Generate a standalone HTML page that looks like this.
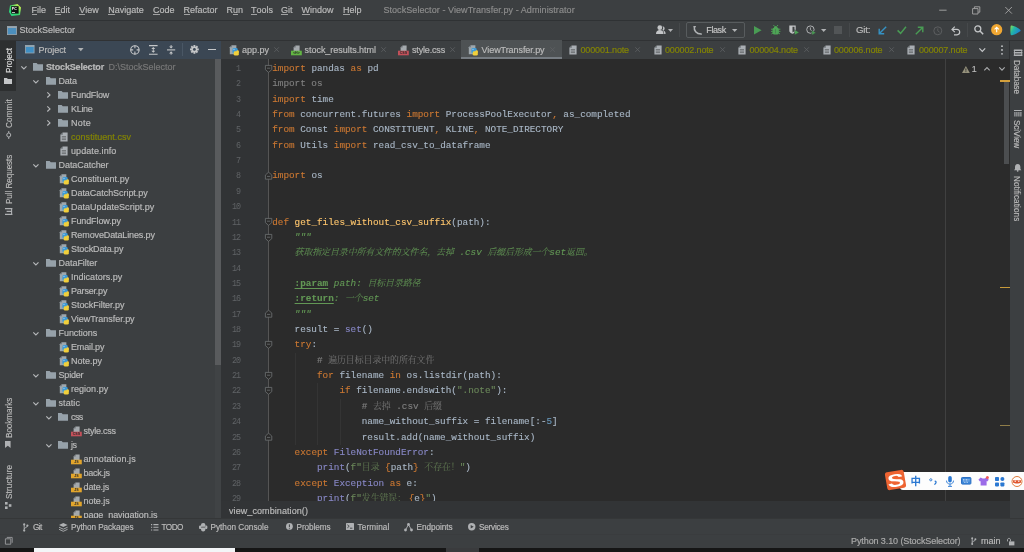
<!DOCTYPE html><html><head><meta charset="utf-8"><title>StockSelector</title><style>
*{box-sizing:border-box;margin:0;padding:0}
html,body{width:1024px;height:552px;overflow:hidden;background:#3c3f41}
body{position:relative;font-family:"Liberation Sans","Noto Sans CJK SC",sans-serif;font-size:9px;color:#bbbbbb;letter-spacing:0;-webkit-font-smoothing:antialiased}
.a{position:absolute;white-space:nowrap}
.t{position:absolute;white-space:nowrap;line-height:12px;height:12px;-webkit-text-stroke:0.18px currentColor}
.ul{background:linear-gradient(currentColor,currentColor) 0 10.300px/100% 0.800px no-repeat;display:inline-block;height:12px}
.code{position:absolute;left:272.2px;white-space:pre;font-family:"Liberation Mono","Noto Sans CJK SC",monospace;font-size:9.33px;letter-spacing:0;line-height:15.36px;height:15.36px;color:#a9b7c6;-webkit-text-stroke:0.12px currentColor}
.ln{position:absolute;left:221px;width:19.200px;text-align:right;font-family:"Liberation Mono","Noto Sans CJK SC",monospace;font-size:9.33px;letter-spacing:-1px;transform:scaleX(.9);transform-origin:100% 50%;line-height:15.36px;height:15.36px;color:#606366}
.k{color:#cc7832}.g{color:#808080}.f{color:#ffc66d}.b{color:#8888c6}.s{color:#6a8759}.n{color:#6897bb}
.d{color:#629755;font-style:italic}
.s .c,.g .c{opacity:.82}
.d .c{opacity:.9}
.c{font-family:"Liberation Mono","Noto Serif CJK SC","Noto Sans CJK SC",serif;font-weight:300;font-size:8.85px;letter-spacing:0}
.vt{position:absolute;white-space:nowrap;line-height:12px;height:12px;transform-origin:0 0;-webkit-text-stroke:0.15px currentColor}
svg{position:absolute;overflow:visible}
</style></head><body><div id="root" style="position:absolute;left:0;top:0;width:1024px;height:552px;will-change:transform">
<div class="a" style="left:0px;top:0px;width:1024px;height:20px;background:#3c3f41;"></div>
<div class="a" style="left:0px;top:20px;width:1024px;height:20px;background:#3c3f41;"></div>
<div class="a" style="left:0px;top:19.5px;width:1024px;height:1px;background:#2f3234;"></div>
<div class="a" style="left:0px;top:40px;width:16px;height:478px;background:#3c3f41;"></div>
<div class="a" style="left:0px;top:40px;width:16px;height:50.5px;background:#2d2f30;"></div>
<div class="a" style="left:15.7px;top:90.5px;width:0.7px;height:427px;background:#383a3c;"></div>
<div class="a" style="left:16px;top:40px;width:205px;height:19px;background:#3b4754;"></div>
<div class="a" style="left:16px;top:59px;width:205px;height:459px;background:#3c3f41;"></div>
<div class="a" style="left:215.2px;top:59px;width:5.8px;height:459px;background:#404345;"></div>
<div class="a" style="left:215.2px;top:59px;width:5.8px;height:305.5px;background:#595b5d;"></div>
<div class="a" style="left:221px;top:40px;width:790px;height:19px;background:#3c3f41;"></div>
<div class="a" style="left:221px;top:58.6px;width:789px;height:0.8px;background:#323232;"></div>
<div class="a" style="left:221px;top:59px;width:47.5px;height:442px;background:#313335;"></div>
<div class="a" style="left:268.5px;top:59px;width:742.5px;height:442px;background:#2b2b2b;"></div>
<div class="a" style="left:268.3px;top:59px;width:0.8px;height:442px;background:#555555;"></div>
<div class="a" style="left:944.7px;top:59px;width:1px;height:442px;background:#404040;"></div>
<div class="a" style="left:1003.8px;top:81px;width:5.5px;height:83px;background:#4c4e50;"></div>
<div class="a" style="left:1000px;top:80.2px;width:9.6px;height:1.4px;background:#d4a03c;"></div>
<div class="a" style="left:1000px;top:286.6px;width:9.6px;height:1.2px;background:#c79a3a;"></div>
<div class="a" style="left:1000px;top:425.3px;width:9.6px;height:1px;background:#8f7d49;"></div>
<div class="a" style="left:221px;top:501px;width:789px;height:17px;background:#323436;"></div>
<div class="a" style="left:1010px;top:40px;width:14px;height:478px;background:#3c3f41;"></div>
<div class="a" style="left:0px;top:518px;width:1024px;height:18px;background:#3c3f41;"></div>
<div class="a" style="left:0px;top:517.6px;width:1024px;height:0.8px;background:#353738;"></div>
<div class="a" style="left:0px;top:536px;width:1024px;height:11.6px;background:#3c3f41;"></div>
<div class="a" style="left:0px;top:534.2px;width:1024px;height:0.8px;background:#3a3c3e;"></div>
<div class="a" style="left:0px;top:547.6px;width:1024px;height:4.4px;background:#161616;"></div>
<div class="a" style="left:33.5px;top:547.9px;width:201.5px;height:4.1px;background:#f3f5f7;"></div>
<div class="a" style="left:445.5px;top:548.2px;width:33.5px;height:3.8px;background:#3a3b3d;"></div>
<div class="a" style="left:0px;top:39.5px;width:1024px;height:1px;background:#303234;"></div>
<div class="a" style="left:1009.3px;top:40.4px;width:0.9px;height:18.6px;background:#2f3133;"></div>
<div class="t m" style="left:31.5px;top:4px;color:#bbbbbb;"><span class="ul">F</span>ile</div>
<div class="t m" style="left:54.5px;top:4px;color:#bbbbbb;"><span class="ul">E</span>dit</div>
<div class="t m" style="left:79.3px;top:4px;color:#bbbbbb;"><span class="ul">V</span>iew</div>
<div class="t m" style="left:108.2px;top:4px;color:#bbbbbb;"><span class="ul">N</span>avigate</div>
<div class="t m" style="left:153px;top:4px;color:#bbbbbb;"><span class="ul">C</span>ode</div>
<div class="t m" style="left:183.5px;top:4px;color:#bbbbbb;"><span class="ul">R</span>efactor</div>
<div class="t m" style="left:226.5px;top:4px;color:#bbbbbb;">R<span class="ul">u</span>n</div>
<div class="t m" style="left:251px;top:4px;color:#bbbbbb;"><span class="ul">T</span>ools</div>
<div class="t m" style="left:281px;top:4px;color:#bbbbbb;"><span class="ul">G</span>it</div>
<div class="t m" style="left:301.5px;top:4px;color:#bbbbbb;"><span class="ul">W</span>indow</div>
<div class="t m" style="left:343px;top:4px;color:#bbbbbb;"><span class="ul">H</span>elp</div>
<div class="t" style="left:383.4px;top:4px;color:#8c8c8c;letter-spacing:0.069px;">StockSelector - ViewTransfer.py - Administrator</div>
<svg style="left:9px;top:3.5px" width="12" height="12" viewBox="0 0 12 12"><defs><linearGradient id="pg" x1="0" y1="1" x2="1" y2="0"><stop offset="0" stop-color="#21d789"/><stop offset=".5" stop-color="#3bd66a"/><stop offset="1" stop-color="#fcf84a"/></linearGradient></defs><path d="M1 1.5 L8.5 0 L12 3.5 L11 11 L2.5 12 L0 8z" fill="url(#pg)"/><rect x="2.2" y="2.2" width="7.4" height="7.4" fill="#111"/><rect x="3" y="8" width="3" height=".7" fill="#fff"/><text x="2.8" y="6.2" font-family="Liberation Sans,sans-serif" font-weight="bold" font-size="3.6" fill="#fff" letter-spacing="0">PC</text></svg>
<svg style="left:939px;top:5px" width="80" height="12" viewBox="0 0 80 12" fill="none" stroke="#a8a8a8" stroke-width="0.9"><path d="M0.2 5.2h7.4"/><path d="M33.6 3.6h5.4v5.4h-5.4z M35.4 3.4v-1.6h5.4v5.4h-1.6"/><path d="M66.3 2l6.6 6.6M72.9 2l-6.6 6.6"/></svg>
<svg style="left:6.5px;top:25.5px" width="10" height="9" viewBox="0 0 10 9"><rect x=".4" y=".4" width="9.2" height="8.2" fill="#4c8fbd" stroke="#9aa7b0" stroke-width=".8"/><rect x=".4" y=".4" width="9.2" height="1.6" fill="#9aa7b0"/></svg>
<div class="t" style="left:19.5px;top:24px;color:#bbbbbb;">StockSelector</div>
<svg style="left:655.8px;top:25.2px" width="9.6" height="9.4" viewBox="0 0 9.6 9.4" ><circle cx="3.800" cy="2.700" r="2.400" fill="#c3c5c7"/><path d="M0 9c0-2.800 1.700-3.900 3.800-3.900s3.800 1.100 3.800 3.900z" fill="#c3c5c7"/><path d="M6.400 1.200c1.400 0 2.200 1 2.200 2.200 0 1-.5 1.800-1.400 2.100 1.500.300 2.400 1.400 2.400 3.500h-1.400c0-2-.7-3.300-2-3.900.6-.6 1-1.300 1-2.200 0-.7-.3-1.300-.8-1.700z" fill="#c3c5c7"/></svg>
<svg style="left:667.5px;top:29px" width="5" height="3" viewBox="0 0 5 3" ><path d="M0 0h5l-2.5 3z" fill="#afb1b3"/></svg>
<div class="a" style="left:679px;top:23px;width:0.8px;height:14px;background:#46494b;"></div>
<div class="a" style="left:686.3px;top:22.4px;width:59px;height:15.400px;border:0.8px solid #585c5e;border-radius:2px"></div>
<svg style="left:693px;top:25.5px" width="9" height="9" viewBox="0 0 9 9" ><path d="M1.400 .8c-.7 3.600 1.800 7 6.800 7.300" fill="none" stroke="#b0b3b5" stroke-width="1.500" stroke-linecap="round"/><path d="M.4 .7h2.600" stroke="#b0b3b5" stroke-width="1.100"/></svg>
<div class="t" style="left:706.3px;top:24.3px;color:#c4c4c4;letter-spacing:-0.403px;">Flask</div>
<svg style="left:732px;top:29px" width="5.4" height="3" viewBox="0 0 5.4 3" ><path d="M0 0h5.4l-2.7 3z" fill="#afb1b3"/></svg>
<svg style="left:754px;top:26px" width="8" height="8.4" viewBox="0 0 8 8.4" ><path d="M0 0l7.6 4.2-7.6 4.2z" fill="#499c54"/></svg>
<svg style="left:770.6px;top:24.8px" width="9.4" height="10" viewBox="0 0 9.4 10" ><rect x="1.500" y="2.800" width="6.400" height="6.600" rx="1.600" fill="#4ea556"/><path d="M2.900 3c0-1.200.8-1.900 1.800-1.900s1.800.7 1.800 1.900z" fill="#4ea556"/><path d="M0 4.200h1.800M9.400 4.200h-1.800M0 6.400h1.800M9.400 6.400h-1.800M.4 9l1.600-1M9 9l-1.600-1M2.400 0l1.100 1.300M7 0l-1.100 1.300" stroke="#4ea556" stroke-width=".9" fill="none"/><path d="M4.700 4v4.400" stroke="#3c3f41" stroke-width=".6" opacity=".6"/></svg>
<svg style="left:788.8px;top:25px" width="10.4" height="10.4" viewBox="0 0 10.4 10.4" ><path d="M.3 .5h6.400v5c0 1.700-1.300 2.700-3.200 3.300-1.900-.6-3.200-1.600-3.200-3.300z" fill="#c3c5c7"/><path d="M3.500 1.800h2v3.700c0 .8-.7 1.500-2 2z" fill="#3c3f41"/><path d="M5.600 4.700l4.600 2.700-4.600 2.700z" fill="#4ea556" stroke="#3c3f41" stroke-width=".5"/></svg>
<svg style="left:806.2px;top:25px" width="10" height="10.4" viewBox="0 0 10 10.4" ><circle cx="4.400" cy="4.600" r="3.700" fill="none" stroke="#afb1b3" stroke-width="1"/><path d="M4.400 2.400v2.400l1.600 1" fill="none" stroke="#afb1b3" stroke-width=".9"/><path d="M5.800 5.200l4.200 2.500-4.200 2.500z" fill="#499c54" stroke="#3c3f41" stroke-width=".5"/></svg>
<svg style="left:821px;top:29px" width="5.4" height="3" viewBox="0 0 5.4 3" ><path d="M0 0h5.4l-2.700 3z" fill="#afb1b3"/></svg>
<div class="a" style="left:834.3px;top:26.4px;width:7.4px;height:7.2px;background:#525557;"></div>
<div class="a" style="left:849.2px;top:23px;width:0.8px;height:14px;background:#46494b;"></div>
<div class="t" style="left:856px;top:24px;color:#bbbbbb;letter-spacing:-0.195px;font-size:9.700px;">Git:</div>
<svg style="left:878px;top:25.8px" width="9" height="9" viewBox="0 0 9 9" ><path d="M8.200 .8l-6.800 6.800M1.200 2.800v5h5" fill="none" stroke="#3592c4" stroke-width="1.400"/></svg>
<svg style="left:896.5px;top:26px" width="9.6" height="8.4" viewBox="0 0 9.6 8.4" ><path d="M.6 4.400l3 3 5.400-6.600" fill="none" stroke="#499c54" stroke-width="1.500"/></svg>
<svg style="left:915px;top:25.8px" width="9" height="9" viewBox="0 0 9 9" ><path d="M.8 8.200l6.800-6.800M2.800 1.200h5v5" fill="none" stroke="#499c54" stroke-width="1.400"/></svg>
<svg style="left:932.5px;top:25.5px" width="9.6" height="9.6" viewBox="0 0 9.6 9.6" ><circle cx="4.800" cy="4.800" r="4" fill="none" stroke="#5c5e60" stroke-width="1"/><path d="M4.800 2.400v2.600l1.800 1.200" fill="none" stroke="#5c5e60" stroke-width=".9"/></svg>
<svg style="left:951px;top:25.6px" width="9.5" height="9.5" viewBox="0 0 9.5 9.5" ><path d="M1.600 3.400h4.400a2.700 2.700 0 0 1 0 5.400h-3" fill="none" stroke="#c4c6c8" stroke-width="1.200"/><path d="M3.800 .6l-2.800 2.800 2.800 2.800" fill="none" stroke="#c4c6c8" stroke-width="1.200"/></svg>
<div class="a" style="left:967.4px;top:23px;width:0.8px;height:14px;background:#46494b;"></div>
<svg style="left:974px;top:25.2px" width="9.6" height="9.6" viewBox="0 0 9.6 9.6" ><circle cx="3.800" cy="3.800" r="3" fill="none" stroke="#c4c6c8" stroke-width="1.300"/><path d="M6 6l3.200 3.200" stroke="#c4c6c8" stroke-width="1.500"/></svg>
<svg style="left:990.8px;top:24.2px" width="11.4" height="11.4" viewBox="0 0 11.4 11.4" ><circle cx="5.700" cy="5.700" r="5.600" fill="#f0a732"/><path d="M5.700 8.300v-4.800M3.600 5.400l2.100-2.100 2.100 2.100" fill="none" stroke="#fff" stroke-width="1.100"/></svg>
<svg style="left:1009.6px;top:24.5px" width="11" height="10.8" viewBox="0 0 11 10.8" ><defs><linearGradient id="tg" x1="0" y1="0" x2="1" y2=".6"><stop offset="0" stop-color="#8ee04f"/><stop offset=".4" stop-color="#23b7a4"/><stop offset="1" stop-color="#1c7fd6"/></linearGradient></defs><path d="M1.800 .5c3.200 .8 6.400 2.400 8.400 4.200.6.500.6 1.200 0 1.600-2.200 1.700-5 3.200-8.200 4-.8.200-1.300-.200-1.400-1-.300-2.600-.300-5.200 0-7.800.1-.8.500-1.200 1.200-1z" fill="url(#tg)"/></svg>
<div class="a" style="left:461px;top:40.4px;width:100.5px;height:19px;background:#4e5254;"></div>
<div class="a" style="left:461px;top:57px;width:100.5px;height:2.4px;background:#767c82;"></div>
<svg style="left:229px;top:44.9px" width="10" height="11" viewBox="0 0 10 11" ><path d="M.8 2.200l2-2h4.600v9h-6.600z" fill="#9ea7ad"/><path d="M.8 2.200h2v-2z" fill="#6f787e"/><rect x="3.500" y="3" width="5.200" height="4.400" rx="1.400" fill="#3f9ad6"/><rect x="3.500" y="5" width="2.400" height="3.400" rx="1" fill="#3f9ad6"/><rect x="4.700" y="6.300" width="5.100" height="4.300" rx="1.400" fill="#f2d03b"/><rect x="7.500" y="5.200" width="2.300" height="3" rx="1" fill="#f2d03b"/><circle cx="5" cy="4.300" r=".5" fill="#e8f2fa"/></svg>
<div class="t" style="left:242px;top:44.4px;color:#bbbbbb;letter-spacing:-0.005px;">app.py</div>
<svg style="left:273.9px;top:46.8px" width="5.2" height="5.2" viewBox="0 0 5.2 5.2" ><path d="M.3 .3l4.600 4.600M4.900 .3l-4.600 4.600" stroke="#5e6163" stroke-width=".8"/></svg>
<svg style="left:291px;top:44.9px" width="10.8" height="10.5" viewBox="0 0 10.8 10.5" ><path d="M2.600 2.400l2-2h4v6h-6z" fill="#a4a9ad"/><path d="M2.600 2.400h2v-2z" fill="#6f757a"/><rect x="0" y="5.700" width="10.800" height="4.600" fill="#62b543"/><text x="5.400" y="9.300" text-anchor="middle" font-family="Liberation Sans,sans-serif" font-weight="bold" font-size="3.600" fill="#2b2b2b" letter-spacing="0">&lt;H&gt;</text></svg>
<div class="t" style="left:304.5px;top:44.4px;color:#bbbbbb;letter-spacing:-0.030px;">stock_results.html</div>
<svg style="left:381.4px;top:46.8px" width="5.2" height="5.2" viewBox="0 0 5.2 5.2" ><path d="M.3 .3l4.600 4.600M4.900 .3l-4.600 4.600" stroke="#5e6163" stroke-width=".8"/></svg>
<svg style="left:398px;top:44.9px" width="10.8" height="10.5" viewBox="0 0 10.8 10.5" ><path d="M2.600 2.400l2-2h4v6h-6z" fill="#a4a9ad"/><path d="M2.600 2.400h2v-2z" fill="#6f757a"/><rect x="0" y="5.700" width="10.800" height="4.600" fill="#c4505a"/><text x="5.400" y="9.300" text-anchor="middle" font-family="Liberation Sans,sans-serif" font-weight="bold" font-size="3.600" fill="#2b2b2b" letter-spacing="0">CSS</text></svg>
<div class="t" style="left:412px;top:44.4px;color:#bbbbbb;letter-spacing:-0.168px;">style.css</div>
<svg style="left:449.9px;top:46.8px" width="5.2" height="5.2" viewBox="0 0 5.2 5.2" ><path d="M.3 .3l4.600 4.600M4.900 .3l-4.600 4.600" stroke="#5e6163" stroke-width=".8"/></svg>
<svg style="left:468px;top:44.9px" width="10" height="11" viewBox="0 0 10 11" ><path d="M.8 2.200l2-2h4.600v9h-6.600z" fill="#9ea7ad"/><path d="M.8 2.200h2v-2z" fill="#6f787e"/><rect x="3.500" y="3" width="5.200" height="4.400" rx="1.400" fill="#3f9ad6"/><rect x="3.500" y="5" width="2.400" height="3.400" rx="1" fill="#3f9ad6"/><rect x="4.700" y="6.300" width="5.100" height="4.300" rx="1.400" fill="#f2d03b"/><rect x="7.500" y="5.200" width="2.300" height="3" rx="1" fill="#f2d03b"/><circle cx="5" cy="4.300" r=".5" fill="#e8f2fa"/></svg>
<div class="t" style="left:481.5px;top:44.4px;color:#bbbbbb;letter-spacing:-0.069px;">ViewTransfer.py</div>
<svg style="left:550.4px;top:46.8px" width="5.2" height="5.2" viewBox="0 0 5.2 5.2" ><path d="M.3 .3l4.600 4.600M4.900 .3l-4.600 4.600" stroke="#5e6163" stroke-width=".8"/></svg>
<svg style="left:569px;top:44.9px" width="8" height="10" viewBox="0 0 8 10" ><path d="M.4 2.800l2.400-2.400h4.800v9.200h-7.200z" fill="#a9aeb3"/><path d="M.4 2.800h2.400v-2.400z" fill="#70767b"/><path d="M1.800 4.600h4.200M1.800 6.100h4.200M1.800 7.600h4.200" stroke="#3c3f41" stroke-width=".7" opacity=".75"/></svg>
<div class="t" style="left:580.5px;top:44.4px;color:#848504;letter-spacing:-0.142px;">000001.note</div>
<svg style="left:635.4px;top:46.8px" width="5.2" height="5.2" viewBox="0 0 5.2 5.2" ><path d="M.3 .3l4.600 4.600M4.900 .3l-4.600 4.600" stroke="#5e6163" stroke-width=".8"/></svg>
<svg style="left:653.5px;top:44.9px" width="8" height="10" viewBox="0 0 8 10" ><path d="M.4 2.800l2.400-2.400h4.800v9.200h-7.200z" fill="#a9aeb3"/><path d="M.4 2.800h2.400v-2.400z" fill="#70767b"/><path d="M1.800 4.600h4.200M1.800 6.100h4.200M1.800 7.600h4.200" stroke="#3c3f41" stroke-width=".7" opacity=".75"/></svg>
<div class="t" style="left:665px;top:44.4px;color:#848504;letter-spacing:-0.142px;">000002.note</div>
<svg style="left:719.9px;top:46.8px" width="5.2" height="5.2" viewBox="0 0 5.2 5.2" ><path d="M.3 .3l4.600 4.600M4.900 .3l-4.600 4.600" stroke="#5e6163" stroke-width=".8"/></svg>
<svg style="left:738px;top:44.9px" width="8" height="10" viewBox="0 0 8 10" ><path d="M.4 2.800l2.400-2.400h4.800v9.200h-7.200z" fill="#a9aeb3"/><path d="M.4 2.800h2.400v-2.400z" fill="#70767b"/><path d="M1.800 4.600h4.200M1.800 6.100h4.200M1.800 7.600h4.200" stroke="#3c3f41" stroke-width=".7" opacity=".75"/></svg>
<div class="t" style="left:749.5px;top:44.4px;color:#848504;letter-spacing:-0.142px;">000004.note</div>
<svg style="left:804.4px;top:46.8px" width="5.2" height="5.2" viewBox="0 0 5.2 5.2" ><path d="M.3 .3l4.600 4.600M4.900 .3l-4.600 4.600" stroke="#5e6163" stroke-width=".8"/></svg>
<svg style="left:822.5px;top:44.9px" width="8" height="10" viewBox="0 0 8 10" ><path d="M.4 2.800l2.400-2.400h4.800v9.200h-7.200z" fill="#a9aeb3"/><path d="M.4 2.800h2.400v-2.400z" fill="#70767b"/><path d="M1.800 4.600h4.200M1.800 6.100h4.200M1.800 7.600h4.200" stroke="#3c3f41" stroke-width=".7" opacity=".75"/></svg>
<div class="t" style="left:834px;top:44.4px;color:#848504;letter-spacing:-0.142px;">000006.note</div>
<svg style="left:888.9px;top:46.8px" width="5.2" height="5.2" viewBox="0 0 5.2 5.2" ><path d="M.3 .3l4.600 4.600M4.900 .3l-4.600 4.600" stroke="#5e6163" stroke-width=".8"/></svg>
<svg style="left:907px;top:44.9px" width="8" height="10" viewBox="0 0 8 10" ><path d="M.4 2.800l2.400-2.400h4.800v9.200h-7.200z" fill="#a9aeb3"/><path d="M.4 2.800h2.400v-2.400z" fill="#70767b"/><path d="M1.800 4.600h4.200M1.800 6.100h4.200M1.800 7.600h4.200" stroke="#3c3f41" stroke-width=".7" opacity=".75"/></svg>
<div class="t" style="left:919px;top:44.4px;color:#848504;letter-spacing:-0.142px;">000007.note</div>
<svg style="left:979px;top:47.7px" width="6.6" height="4.4" viewBox="0 0 6.6 4.4" ><path d="M.4 .4l2.900 3 2.900-3" fill="none" stroke="#c4c6c8" stroke-width="1.200"/></svg>
<svg style="left:1001px;top:44.9px" width="2" height="10" viewBox="0 0 2 10" ><circle cx="1" cy="1.200" r=".9" fill="#c4c6c8"/><circle cx="1" cy="5" r=".9" fill="#c4c6c8"/><circle cx="1" cy="8.800" r=".9" fill="#c4c6c8"/></svg>
<svg style="left:24.5px;top:45.2px" width="9.5" height="8.4" viewBox="0 0 9.5 8.4" ><rect x=".4" y=".4" width="8.700" height="7.600" fill="#3f8fc4" stroke="#9aa7b0" stroke-width=".8"/><rect x=".4" y=".4" width="8.700" height="1.500" fill="#9aa7b0"/></svg>
<div class="t" style="left:38.5px;top:43.8px;color:#bbbbbb;letter-spacing:-0.074px;">Project</div>
<svg style="left:77.5px;top:48.4px" width="5.6" height="3.2" viewBox="0 0 5.6 3.2" ><path d="M0 0h5.600l-2.800 3.200z" fill="#afb1b3"/></svg>
<svg style="left:129.6px;top:44.7px" width="9.8" height="9.8" viewBox="0 0 9.8 9.8" ><circle cx="4.900" cy="4.900" r="4.200" fill="none" stroke="#c4c6c8" stroke-width="1.100"/><path d="M4.900 .6v2.600M4.900 6.600v2.600M.6 4.900h2.600M6.600 4.900h2.600" stroke="#c4c6c8" stroke-width="1.100"/></svg>
<svg style="left:148.5px;top:44.8px" width="8.6" height="9.8" viewBox="0 0 8.6 9.8" ><path d="M0 .6h8.600M0 9.200h8.600" stroke="#c4c6c8" stroke-width="1.100"/><path d="M4.300 2l2 2h-4zM4.300 7.800l2-2h-4z" fill="#c4c6c8"/><path d="M4.300 3.600v2.600" stroke="#c4c6c8" stroke-width=".9"/></svg>
<svg style="left:166.8px;top:44.8px" width="8.2" height="9.8" viewBox="0 0 8.2 9.8" ><path d="M0 4.900h8.200" stroke="#c4c6c8" stroke-width="1.100"/><path d="M4.100 3.600l2-2.200h-4zM4.100 6.200l2 2.200h-4z" fill="#c4c6c8"/><path d="M4.100 0v2M4.100 9.800v-2" stroke="#c4c6c8" stroke-width=".9"/></svg>
<div class="a" style="left:182px;top:43px;width:0.8px;height:13px;background:#4a5765;"></div>
<svg style="left:189.7px;top:45.2px" width="8.8" height="8.8" viewBox="0 0 8.8 8.8" ><g transform="translate(4.400 4.400)"><g fill="#c4c6c8"><rect x="-.95" y="-4.400" width="1.900" height="2.200" transform="rotate(0)"/><rect x="-.95" y="-4.400" width="1.900" height="2.200" transform="rotate(45)"/><rect x="-.95" y="-4.400" width="1.900" height="2.200" transform="rotate(90)"/><rect x="-.95" y="-4.400" width="1.900" height="2.200" transform="rotate(135)"/><rect x="-.95" y="-4.400" width="1.900" height="2.200" transform="rotate(180)"/><rect x="-.95" y="-4.400" width="1.900" height="2.200" transform="rotate(225)"/><rect x="-.95" y="-4.400" width="1.900" height="2.200" transform="rotate(270)"/><rect x="-.95" y="-4.400" width="1.900" height="2.200" transform="rotate(315)"/></g><circle r="3" fill="#c4c6c8"/><circle r="1.400" fill="#3b4754"/></g></svg>
<div class="a" style="left:208px;top:49.3px;width:7.6px;height:1.1px;background:#c4c6c8;"></div>
<div class="a" style="left:16px;top:59px;width:199px;height:458.500px;overflow:hidden">
<svg style="left:4.8px;top:6.6px" width="5.8" height="3.4" viewBox="0 0 5.8 3.4" ><path d="M.3 .3l2.600 2.700 2.600-2.700" fill="none" stroke="#b6b8ba" stroke-width="1.150"/></svg>
<svg style="left:17.2px;top:4.1px" width="10" height="7.8" viewBox="0 0 10 7.8" ><path d="M0 0h3.600l1.200 1.300h5.200v6.500h-10z" fill="#96a1a9"/></svg>
<div class="t" style="left:30px;top:2px;color:#bbbbbb;letter-spacing:-0.156px;"><b>StockSelector</b></div>
<div class="t" style="left:92.6px;top:2px;color:#787878;letter-spacing:-0.002px;">D:\StockSelector</div>
<svg style="left:17.3px;top:20.6px" width="5.8" height="3.4" viewBox="0 0 5.8 3.4" ><path d="M.3 .3l2.600 2.700 2.600-2.700" fill="none" stroke="#b6b8ba" stroke-width="1.150"/></svg>
<svg style="left:29.7px;top:18.1px" width="10" height="7.8" viewBox="0 0 10 7.8" ><path d="M0 0h3.600l1.200 1.300h5.200v6.500h-10z" fill="#96a1a9"/></svg>
<div class="t" style="left:42.5px;top:16px;color:#bbbbbb;letter-spacing:-0.204px;">Data</div>
<svg style="left:30.8px;top:33.1px" width="3.4" height="5.8" viewBox="0 0 3.4 5.8" ><path d="M.3 .3l2.700 2.600-2.700 2.600" fill="none" stroke="#b6b8ba" stroke-width="1.150"/></svg>
<svg style="left:42.2px;top:32.1px" width="10" height="7.8" viewBox="0 0 10 7.8" ><path d="M0 0h3.600l1.200 1.300h5.200v6.500h-10z" fill="#96a1a9"/></svg>
<div class="t" style="left:55px;top:30px;color:#bbbbbb;letter-spacing:-0.164px;">FundFlow</div>
<svg style="left:30.8px;top:47.1px" width="3.4" height="5.8" viewBox="0 0 3.4 5.8" ><path d="M.3 .3l2.700 2.600-2.700 2.600" fill="none" stroke="#b6b8ba" stroke-width="1.150"/></svg>
<svg style="left:42.2px;top:46.1px" width="10" height="7.8" viewBox="0 0 10 7.8" ><path d="M0 0h3.600l1.200 1.300h5.200v6.500h-10z" fill="#96a1a9"/></svg>
<div class="t" style="left:55px;top:44px;color:#bbbbbb;letter-spacing:-0.306px;">KLine</div>
<svg style="left:30.8px;top:61.1px" width="3.4" height="5.8" viewBox="0 0 3.4 5.8" ><path d="M.3 .3l2.700 2.600-2.700 2.600" fill="none" stroke="#b6b8ba" stroke-width="1.150"/></svg>
<svg style="left:42.2px;top:60.1px" width="10" height="7.8" viewBox="0 0 10 7.8" ><path d="M0 0h3.600l1.200 1.300h5.200v6.500h-10z" fill="#96a1a9"/></svg>
<div class="t" style="left:55px;top:58px;color:#bbbbbb;letter-spacing:0.246px;">Note</div>
<svg style="left:43.6px;top:72.8px" width="8" height="10" viewBox="0 0 8 10" ><path d="M.4 2.800l2.400-2.400h4.800v9.200h-7.200z" fill="#a9aeb3"/><path d="M.4 2.800h2.400v-2.400z" fill="#70767b"/><path d="M1.800 4.600h4.200M1.800 6.100h4.200M1.800 7.600h4.200" stroke="#3c3f41" stroke-width=".7" opacity=".75"/></svg>
<div class="t" style="left:55px;top:72px;color:#848504;letter-spacing:0.031px;">constituent.csv</div>
<svg style="left:43.6px;top:86.8px" width="8" height="10" viewBox="0 0 8 10" ><path d="M.4 2.800l2.400-2.400h4.800v9.200h-7.200z" fill="#a9aeb3"/><path d="M.4 2.800h2.400v-2.400z" fill="#70767b"/><path d="M1.800 4.600h4.200M1.800 6.100h4.200M1.800 7.600h4.200" stroke="#3c3f41" stroke-width=".7" opacity=".75"/></svg>
<div class="t" style="left:55px;top:86px;color:#bbbbbb;letter-spacing:0.078px;">update.info</div>
<svg style="left:17.3px;top:104.6px" width="5.8" height="3.4" viewBox="0 0 5.8 3.4" ><path d="M.3 .3l2.600 2.700 2.600-2.700" fill="none" stroke="#b6b8ba" stroke-width="1.150"/></svg>
<svg style="left:29.7px;top:102.1px" width="10" height="7.8" viewBox="0 0 10 7.8" ><path d="M0 0h3.600l1.200 1.300h5.200v6.500h-10z" fill="#96a1a9"/></svg>
<div class="t" style="left:42.5px;top:100px;color:#bbbbbb;letter-spacing:-0.048px;">DataCatcher</div>
<svg style="left:43.1px;top:114.5px" width="10" height="11" viewBox="0 0 10 11" ><path d="M.8 2.200l2-2h4.600v9h-6.600z" fill="#9ea7ad"/><path d="M.8 2.200h2v-2z" fill="#6f787e"/><rect x="3.500" y="3" width="5.200" height="4.400" rx="1.400" fill="#3f9ad6"/><rect x="3.500" y="5" width="2.400" height="3.400" rx="1" fill="#3f9ad6"/><rect x="4.700" y="6.300" width="5.100" height="4.300" rx="1.400" fill="#f2d03b"/><rect x="7.500" y="5.200" width="2.300" height="3" rx="1" fill="#f2d03b"/><circle cx="5" cy="4.300" r=".5" fill="#e8f2fa"/></svg>
<div class="t" style="left:55px;top:114px;color:#bbbbbb;letter-spacing:0.054px;">Constituent.py</div>
<svg style="left:43.1px;top:128.5px" width="10" height="11" viewBox="0 0 10 11" ><path d="M.8 2.200l2-2h4.600v9h-6.600z" fill="#9ea7ad"/><path d="M.8 2.200h2v-2z" fill="#6f787e"/><rect x="3.500" y="3" width="5.200" height="4.400" rx="1.400" fill="#3f9ad6"/><rect x="3.500" y="5" width="2.400" height="3.400" rx="1" fill="#3f9ad6"/><rect x="4.700" y="6.300" width="5.100" height="4.300" rx="1.400" fill="#f2d03b"/><rect x="7.500" y="5.200" width="2.300" height="3" rx="1" fill="#f2d03b"/><circle cx="5" cy="4.300" r=".5" fill="#e8f2fa"/></svg>
<div class="t" style="left:55px;top:128px;color:#bbbbbb;letter-spacing:-0.047px;">DataCatchScript.py</div>
<svg style="left:43.1px;top:142.5px" width="10" height="11" viewBox="0 0 10 11" ><path d="M.8 2.200l2-2h4.600v9h-6.600z" fill="#9ea7ad"/><path d="M.8 2.200h2v-2z" fill="#6f787e"/><rect x="3.500" y="3" width="5.200" height="4.400" rx="1.400" fill="#3f9ad6"/><rect x="3.500" y="5" width="2.400" height="3.400" rx="1" fill="#3f9ad6"/><rect x="4.700" y="6.300" width="5.100" height="4.300" rx="1.400" fill="#f2d03b"/><rect x="7.500" y="5.200" width="2.300" height="3" rx="1" fill="#f2d03b"/><circle cx="5" cy="4.300" r=".5" fill="#e8f2fa"/></svg>
<div class="t" style="left:55px;top:142px;color:#bbbbbb;letter-spacing:0.008px;">DataUpdateScript.py</div>
<svg style="left:43.1px;top:156.5px" width="10" height="11" viewBox="0 0 10 11" ><path d="M.8 2.200l2-2h4.600v9h-6.600z" fill="#9ea7ad"/><path d="M.8 2.200h2v-2z" fill="#6f787e"/><rect x="3.500" y="3" width="5.200" height="4.400" rx="1.400" fill="#3f9ad6"/><rect x="3.500" y="5" width="2.400" height="3.400" rx="1" fill="#3f9ad6"/><rect x="4.700" y="6.300" width="5.100" height="4.300" rx="1.400" fill="#f2d03b"/><rect x="7.500" y="5.200" width="2.300" height="3" rx="1" fill="#f2d03b"/><circle cx="5" cy="4.300" r=".5" fill="#e8f2fa"/></svg>
<div class="t" style="left:55px;top:156px;color:#bbbbbb;letter-spacing:-0.103px;">FundFlow.py</div>
<svg style="left:43.1px;top:170.5px" width="10" height="11" viewBox="0 0 10 11" ><path d="M.8 2.200l2-2h4.600v9h-6.600z" fill="#9ea7ad"/><path d="M.8 2.200h2v-2z" fill="#6f787e"/><rect x="3.500" y="3" width="5.200" height="4.400" rx="1.400" fill="#3f9ad6"/><rect x="3.500" y="5" width="2.400" height="3.400" rx="1" fill="#3f9ad6"/><rect x="4.700" y="6.300" width="5.100" height="4.300" rx="1.400" fill="#f2d03b"/><rect x="7.500" y="5.200" width="2.300" height="3" rx="1" fill="#f2d03b"/><circle cx="5" cy="4.300" r=".5" fill="#e8f2fa"/></svg>
<div class="t" style="left:55px;top:170px;color:#bbbbbb;letter-spacing:-0.125px;">RemoveDataLines.py</div>
<svg style="left:43.1px;top:184.5px" width="10" height="11" viewBox="0 0 10 11" ><path d="M.8 2.200l2-2h4.600v9h-6.600z" fill="#9ea7ad"/><path d="M.8 2.200h2v-2z" fill="#6f787e"/><rect x="3.500" y="3" width="5.200" height="4.400" rx="1.400" fill="#3f9ad6"/><rect x="3.500" y="5" width="2.400" height="3.400" rx="1" fill="#3f9ad6"/><rect x="4.700" y="6.300" width="5.100" height="4.300" rx="1.400" fill="#f2d03b"/><rect x="7.500" y="5.200" width="2.300" height="3" rx="1" fill="#f2d03b"/><circle cx="5" cy="4.300" r=".5" fill="#e8f2fa"/></svg>
<div class="t" style="left:55px;top:184px;color:#bbbbbb;letter-spacing:-0.094px;">StockData.py</div>
<svg style="left:17.3px;top:202.6px" width="5.8" height="3.4" viewBox="0 0 5.8 3.4" ><path d="M.3 .3l2.600 2.700 2.600-2.700" fill="none" stroke="#b6b8ba" stroke-width="1.150"/></svg>
<svg style="left:29.7px;top:200.1px" width="10" height="7.8" viewBox="0 0 10 7.8" ><path d="M0 0h3.600l1.200 1.300h5.200v6.500h-10z" fill="#96a1a9"/></svg>
<div class="t" style="left:42.5px;top:198px;color:#bbbbbb;letter-spacing:-0.032px;">DataFilter</div>
<svg style="left:43.1px;top:212.5px" width="10" height="11" viewBox="0 0 10 11" ><path d="M.8 2.200l2-2h4.600v9h-6.600z" fill="#9ea7ad"/><path d="M.8 2.200h2v-2z" fill="#6f787e"/><rect x="3.500" y="3" width="5.200" height="4.400" rx="1.400" fill="#3f9ad6"/><rect x="3.500" y="5" width="2.400" height="3.400" rx="1" fill="#3f9ad6"/><rect x="4.700" y="6.300" width="5.100" height="4.300" rx="1.400" fill="#f2d03b"/><rect x="7.500" y="5.200" width="2.300" height="3" rx="1" fill="#f2d03b"/><circle cx="5" cy="4.300" r=".5" fill="#e8f2fa"/></svg>
<div class="t" style="left:55px;top:212px;color:#bbbbbb;letter-spacing:0.021px;">Indicators.py</div>
<svg style="left:43.1px;top:226.5px" width="10" height="11" viewBox="0 0 10 11" ><path d="M.8 2.200l2-2h4.600v9h-6.600z" fill="#9ea7ad"/><path d="M.8 2.200h2v-2z" fill="#6f787e"/><rect x="3.500" y="3" width="5.200" height="4.400" rx="1.400" fill="#3f9ad6"/><rect x="3.500" y="5" width="2.400" height="3.400" rx="1" fill="#3f9ad6"/><rect x="4.700" y="6.300" width="5.100" height="4.300" rx="1.400" fill="#f2d03b"/><rect x="7.500" y="5.200" width="2.300" height="3" rx="1" fill="#f2d03b"/><circle cx="5" cy="4.300" r=".5" fill="#e8f2fa"/></svg>
<div class="t" style="left:55px;top:226px;color:#bbbbbb;letter-spacing:-0.203px;">Parser.py</div>
<svg style="left:43.1px;top:240.5px" width="10" height="11" viewBox="0 0 10 11" ><path d="M.8 2.200l2-2h4.600v9h-6.600z" fill="#9ea7ad"/><path d="M.8 2.200h2v-2z" fill="#6f787e"/><rect x="3.500" y="3" width="5.200" height="4.400" rx="1.400" fill="#3f9ad6"/><rect x="3.500" y="5" width="2.400" height="3.400" rx="1" fill="#3f9ad6"/><rect x="4.700" y="6.300" width="5.100" height="4.300" rx="1.400" fill="#f2d03b"/><rect x="7.500" y="5.200" width="2.300" height="3" rx="1" fill="#f2d03b"/><circle cx="5" cy="4.300" r=".5" fill="#e8f2fa"/></svg>
<div class="t" style="left:55px;top:240px;color:#bbbbbb;letter-spacing:-0.045px;">StockFilter.py</div>
<svg style="left:43.1px;top:254.5px" width="10" height="11" viewBox="0 0 10 11" ><path d="M.8 2.200l2-2h4.600v9h-6.600z" fill="#9ea7ad"/><path d="M.8 2.200h2v-2z" fill="#6f787e"/><rect x="3.500" y="3" width="5.200" height="4.400" rx="1.400" fill="#3f9ad6"/><rect x="3.500" y="5" width="2.400" height="3.400" rx="1" fill="#3f9ad6"/><rect x="4.700" y="6.300" width="5.100" height="4.300" rx="1.400" fill="#f2d03b"/><rect x="7.500" y="5.200" width="2.300" height="3" rx="1" fill="#f2d03b"/><circle cx="5" cy="4.300" r=".5" fill="#e8f2fa"/></svg>
<div class="t" style="left:55px;top:254px;color:#bbbbbb;letter-spacing:-0.029px;">ViewTransfer.py</div>
<svg style="left:17.3px;top:272.6px" width="5.8" height="3.4" viewBox="0 0 5.8 3.4" ><path d="M.3 .3l2.600 2.700 2.600-2.700" fill="none" stroke="#b6b8ba" stroke-width="1.150"/></svg>
<svg style="left:29.7px;top:270.1px" width="10" height="7.8" viewBox="0 0 10 7.8" ><path d="M0 0h3.600l1.200 1.300h5.200v6.500h-10z" fill="#96a1a9"/></svg>
<div class="t" style="left:42.5px;top:268px;color:#bbbbbb;letter-spacing:-0.048px;">Functions</div>
<svg style="left:43.1px;top:282.5px" width="10" height="11" viewBox="0 0 10 11" ><path d="M.8 2.200l2-2h4.600v9h-6.600z" fill="#9ea7ad"/><path d="M.8 2.200h2v-2z" fill="#6f787e"/><rect x="3.500" y="3" width="5.200" height="4.400" rx="1.400" fill="#3f9ad6"/><rect x="3.500" y="5" width="2.400" height="3.400" rx="1" fill="#3f9ad6"/><rect x="4.700" y="6.300" width="5.100" height="4.300" rx="1.400" fill="#f2d03b"/><rect x="7.500" y="5.200" width="2.300" height="3" rx="1" fill="#f2d03b"/><circle cx="5" cy="4.300" r=".5" fill="#e8f2fa"/></svg>
<div class="t" style="left:55px;top:282px;color:#bbbbbb;letter-spacing:-0.152px;">Email.py</div>
<svg style="left:43.1px;top:296.5px" width="10" height="11" viewBox="0 0 10 11" ><path d="M.8 2.200l2-2h4.600v9h-6.600z" fill="#9ea7ad"/><path d="M.8 2.200h2v-2z" fill="#6f787e"/><rect x="3.500" y="3" width="5.200" height="4.400" rx="1.400" fill="#3f9ad6"/><rect x="3.500" y="5" width="2.400" height="3.400" rx="1" fill="#3f9ad6"/><rect x="4.700" y="6.300" width="5.100" height="4.300" rx="1.400" fill="#f2d03b"/><rect x="7.500" y="5.200" width="2.300" height="3" rx="1" fill="#f2d03b"/><circle cx="5" cy="4.300" r=".5" fill="#e8f2fa"/></svg>
<div class="t" style="left:55px;top:296px;color:#bbbbbb;letter-spacing:-0.019px;">Note.py</div>
<svg style="left:17.3px;top:314.6px" width="5.8" height="3.4" viewBox="0 0 5.8 3.4" ><path d="M.3 .3l2.600 2.700 2.600-2.700" fill="none" stroke="#b6b8ba" stroke-width="1.150"/></svg>
<svg style="left:29.7px;top:312.1px" width="10" height="7.8" viewBox="0 0 10 7.8" ><path d="M0 0h3.600l1.200 1.300h5.200v6.500h-10z" fill="#96a1a9"/></svg>
<div class="t" style="left:42.5px;top:310px;color:#bbbbbb;letter-spacing:-0.186px;">Spider</div>
<svg style="left:43.1px;top:324.5px" width="10" height="11" viewBox="0 0 10 11" ><path d="M.8 2.200l2-2h4.600v9h-6.600z" fill="#9ea7ad"/><path d="M.8 2.200h2v-2z" fill="#6f787e"/><rect x="3.500" y="3" width="5.200" height="4.400" rx="1.400" fill="#3f9ad6"/><rect x="3.500" y="5" width="2.400" height="3.400" rx="1" fill="#3f9ad6"/><rect x="4.700" y="6.300" width="5.100" height="4.300" rx="1.400" fill="#f2d03b"/><rect x="7.500" y="5.200" width="2.300" height="3" rx="1" fill="#f2d03b"/><circle cx="5" cy="4.300" r=".5" fill="#e8f2fa"/></svg>
<div class="t" style="left:55px;top:324px;color:#bbbbbb;letter-spacing:0.019px;">region.py</div>
<svg style="left:17.3px;top:342.6px" width="5.8" height="3.4" viewBox="0 0 5.8 3.4" ><path d="M.3 .3l2.600 2.700 2.600-2.700" fill="none" stroke="#b6b8ba" stroke-width="1.150"/></svg>
<svg style="left:29.7px;top:340.1px" width="10" height="7.8" viewBox="0 0 10 7.8" ><path d="M0 0h3.600l1.200 1.300h5.200v6.500h-10z" fill="#96a1a9"/></svg>
<div class="t" style="left:42.5px;top:338px;color:#bbbbbb;letter-spacing:0.081px;">static</div>
<svg style="left:29.8px;top:356.6px" width="5.8" height="3.4" viewBox="0 0 5.8 3.4" ><path d="M.3 .3l2.600 2.700 2.600-2.700" fill="none" stroke="#b6b8ba" stroke-width="1.150"/></svg>
<svg style="left:42.2px;top:354.1px" width="10" height="7.8" viewBox="0 0 10 7.8" ><path d="M0 0h3.600l1.200 1.300h5.200v6.500h-10z" fill="#96a1a9"/></svg>
<div class="t" style="left:55px;top:352px;color:#bbbbbb;letter-spacing:-0.600px;">css</div>
<svg style="left:54.5px;top:366.7px" width="10.8" height="10.5" viewBox="0 0 10.8 10.5" ><path d="M2.600 2.400l2-2h4v6h-6z" fill="#a4a9ad"/><path d="M2.600 2.400h2v-2z" fill="#6f757a"/><rect x="0" y="5.700" width="10.800" height="4.600" fill="#c4505a"/><text x="5.400" y="9.300" text-anchor="middle" font-family="Liberation Sans,sans-serif" font-weight="bold" font-size="3.600" fill="#2b2b2b" letter-spacing="0">CSS</text></svg>
<div class="t" style="left:67.5px;top:366px;color:#bbbbbb;letter-spacing:-0.246px;">style.css</div>
<svg style="left:29.8px;top:384.6px" width="5.8" height="3.4" viewBox="0 0 5.8 3.4" ><path d="M.3 .3l2.600 2.700 2.600-2.700" fill="none" stroke="#b6b8ba" stroke-width="1.150"/></svg>
<svg style="left:42.2px;top:382.1px" width="10" height="7.8" viewBox="0 0 10 7.8" ><path d="M0 0h3.600l1.200 1.300h5.200v6.500h-10z" fill="#96a1a9"/></svg>
<div class="t" style="left:55px;top:380px;color:#bbbbbb;letter-spacing:-0.600px;">js</div>
<svg style="left:54.5px;top:394.7px" width="10.8" height="10.5" viewBox="0 0 10.8 10.5" ><path d="M2.600 2.400l2-2h4v6h-6z" fill="#a4a9ad"/><path d="M2.600 2.400h2v-2z" fill="#6f757a"/><rect x="0" y="5.700" width="10.800" height="4.600" fill="#e2a52c"/><text x="5.400" y="9.300" text-anchor="middle" font-family="Liberation Sans,sans-serif" font-weight="bold" font-size="3.600" fill="#2b2b2b" letter-spacing="0">JS</text></svg>
<div class="t" style="left:67.5px;top:394px;color:#bbbbbb;letter-spacing:0.096px;">annotation.js</div>
<svg style="left:54.5px;top:408.7px" width="10.8" height="10.5" viewBox="0 0 10.8 10.5" ><path d="M2.600 2.400l2-2h4v6h-6z" fill="#a4a9ad"/><path d="M2.600 2.400h2v-2z" fill="#6f757a"/><rect x="0" y="5.700" width="10.800" height="4.600" fill="#e2a52c"/><text x="5.400" y="9.300" text-anchor="middle" font-family="Liberation Sans,sans-serif" font-weight="bold" font-size="3.600" fill="#2b2b2b" letter-spacing="0">JS</text></svg>
<div class="t" style="left:67.5px;top:408px;color:#bbbbbb;letter-spacing:-0.259px;">back.js</div>
<svg style="left:54.5px;top:422.7px" width="10.8" height="10.5" viewBox="0 0 10.8 10.5" ><path d="M2.600 2.400l2-2h4v6h-6z" fill="#a4a9ad"/><path d="M2.600 2.400h2v-2z" fill="#6f757a"/><rect x="0" y="5.700" width="10.800" height="4.600" fill="#e2a52c"/><text x="5.400" y="9.300" text-anchor="middle" font-family="Liberation Sans,sans-serif" font-weight="bold" font-size="3.600" fill="#2b2b2b" letter-spacing="0">JS</text></svg>
<div class="t" style="left:67.5px;top:422px;color:#bbbbbb;letter-spacing:-0.119px;">date.js</div>
<svg style="left:54.5px;top:436.7px" width="10.8" height="10.5" viewBox="0 0 10.8 10.5" ><path d="M2.600 2.400l2-2h4v6h-6z" fill="#a4a9ad"/><path d="M2.600 2.400h2v-2z" fill="#6f757a"/><rect x="0" y="5.700" width="10.800" height="4.600" fill="#e2a52c"/><text x="5.400" y="9.300" text-anchor="middle" font-family="Liberation Sans,sans-serif" font-weight="bold" font-size="3.600" fill="#2b2b2b" letter-spacing="0">JS</text></svg>
<div class="t" style="left:67.5px;top:436px;color:#bbbbbb;letter-spacing:-0.062px;">note.js</div>
<svg style="left:54.5px;top:450.7px" width="10.8" height="10.5" viewBox="0 0 10.8 10.5" ><path d="M2.600 2.400l2-2h4v6h-6z" fill="#a4a9ad"/><path d="M2.600 2.400h2v-2z" fill="#6f757a"/><rect x="0" y="5.700" width="10.800" height="4.600" fill="#e2a52c"/><text x="5.400" y="9.300" text-anchor="middle" font-family="Liberation Sans,sans-serif" font-weight="bold" font-size="3.600" fill="#2b2b2b" letter-spacing="0">JS</text></svg>
<div class="t" style="left:67.5px;top:450px;color:#bbbbbb;letter-spacing:-0.059px;">page_navigation.js</div>
</div>
<div class="vt" style="left:3.6px;top:72.5px;color:#dcdcdc;transform:rotate(-90deg);font-size:8.200px;letter-spacing:-0.069px;">Project</div>
<svg style="left:4.3px;top:77.5px" width="8" height="6" viewBox="0 0 8 6" ><path d="M0 0h2.900l1 1h4.100v5h-8z" fill="#c4c6c8"/></svg>
<div class="vt" style="left:3.6px;top:127.5px;color:#bbbbbb;transform:rotate(-90deg);font-size:8.200px;letter-spacing:0.099px;">Commit</div>
<svg style="left:4.5px;top:130.5px" width="7.5" height="8" viewBox="0 0 7.5 8" ><circle cx="3.750" cy="4" r="2" fill="none" stroke="#afb1b3" stroke-width="1"/><path d="M3.750 0v2M3.750 6v2" stroke="#afb1b3" stroke-width="1"/></svg>
<div class="vt" style="left:3.6px;top:204px;color:#bbbbbb;transform:rotate(-90deg);font-size:8.200px;letter-spacing:-0.095px;">Pull Requests</div>
<svg style="left:4.7px;top:207.6px" width="7.5" height="7" viewBox="0 0 7.5 7" ><path d="M0 .6h7.400M6.600 .6v6M1.600 3.400h5M0 6.400h7.400" fill="none" stroke="#afb1b3" stroke-width="1.100"/></svg>
<div class="vt" style="left:3.6px;top:437.7px;color:#bbbbbb;transform:rotate(-90deg);font-size:8.200px;letter-spacing:-0.084px;">Bookmarks</div>
<svg style="left:5.3px;top:440.5px" width="5.6" height="7" viewBox="0 0 5.6 7" ><path d="M0 0h5.600v7l-2.800-2.200-2.800 2.200z" fill="#afb1b3"/></svg>
<div class="vt" style="left:3.6px;top:498.8px;color:#bbbbbb;transform:rotate(-90deg);font-size:8.200px;letter-spacing:0.109px;">Structure</div>
<svg style="left:5px;top:502px" width="6.5" height="7" viewBox="0 0 6.5 7" ><rect x="0" y="0" width="2.600" height="2.600" fill="#afb1b3"/><rect x="3.800" y="2.200" width="2.600" height="2.600" fill="#afb1b3"/><rect x="0" y="4.400" width="2.600" height="2.600" fill="#afb1b3"/></svg>
<svg style="left:1013.6px;top:48.6px" width="8.2" height="7.6" viewBox="0 0 8.2 7.6" ><path d="M.4 1.200h7.400M.4 3.700h7.400M.4 6.200h7.400" stroke="#afb1b3" stroke-width="1.500" stroke-linecap="round"/><path d="M.5 1.200v5M7.700 1.200v5" stroke="#afb1b3" stroke-width=".9"/></svg>
<div class="vt" style="left:1022.2px;top:59.7px;color:#bbbbbb;transform:rotate(90deg);font-size:8.200px;letter-spacing:-0.133px;">Database</div>
<svg style="left:1013.8px;top:109.5px" width="7.8" height="6.6" viewBox="0 0 7.8 6.6" ><path d="M0 .5h7.800M.900 2v4.600M2.900 2v4.600M4.900 2v4.600M6.900 2v4.600" stroke="#afb1b3" stroke-width="1.100" fill="none"/></svg>
<div class="vt" style="left:1022.2px;top:119.7px;color:#bbbbbb;transform:rotate(90deg);font-size:8.200px;letter-spacing:-0.126px;">SciView</div>
<svg style="left:1014px;top:164px" width="7.4" height="7.4" viewBox="0 0 7.4 7.4" ><path d="M3.700 0c2 0 2.700 1.500 2.700 3.200v1.800l1 1.200h-7.400l1-1.200v-1.800c0-1.700.7-3.200 2.700-3.200z" fill="#afb1b3"/><circle cx="3.700" cy="6.800" r=".9" fill="#afb1b3"/></svg>
<div class="vt" style="left:1022.2px;top:175.7px;color:#bbbbbb;transform:rotate(90deg);font-size:8.200px;letter-spacing:0.053px;">Notifications</div>
<div class="a" style="left:221px;top:59px;width:790px;height:442px;overflow:hidden">
<div class="a" style="left:-221px;top:-59px;width:1024px;height:552px">
<div class="a" style="left:295px;top:352.76px;width:0.7px;height:92.16px;background:#343434;"></div>
<div class="a" style="left:317.4px;top:383.48px;width:0.7px;height:61.44px;background:#343434;"></div>
<div class="a" style="left:339.8px;top:398.84px;width:0.7px;height:46.08px;background:#343434;"></div>
<div class="ln" style="top:60.92px">1</div>
<div class="code" style="top:60.92px"><span class="k">import</span> pandas <span class="k">as</span> pd</div>
<div class="ln" style="top:76.28px">2</div>
<div class="code" style="top:76.28px"><span class="g">import os</span></div>
<div class="ln" style="top:91.64px">3</div>
<div class="code" style="top:91.64px"><span class="k">import</span> time</div>
<div class="ln" style="top:107.00px">4</div>
<div class="code" style="top:107.00px"><span class="k">from</span> concurrent.futures <span class="k">import</span> ProcessPoolExecutor<span class="k">,</span> as_completed</div>
<div class="ln" style="top:122.36px">5</div>
<div class="code" style="top:122.36px"><span class="k">from</span> Const <span class="k">import</span> CONSTITUENT<span class="k">,</span> KLINE<span class="k">,</span> NOTE_DIRECTORY</div>
<div class="ln" style="top:137.72px">6</div>
<div class="code" style="top:137.72px"><span class="k">from</span> Utils <span class="k">import</span> read_csv_to_dataframe</div>
<div class="ln" style="top:153.08px">7</div>
<div class="ln" style="top:168.44px">8</div>
<div class="code" style="top:168.44px"><span class="k">import</span> os</div>
<div class="ln" style="top:183.80px">9</div>
<div class="ln" style="top:199.16px">10</div>
<div class="ln" style="top:214.52px">11</div>
<div class="code" style="top:214.52px"><span class="k">def </span><span class="f">get_files_without_csv_suffix</span>(path):</div>
<div class="ln" style="top:229.88px">12</div>
<div class="code" style="top:229.88px">    <span class="d">"""</span></div>
<div class="ln" style="top:245.24px">13</div>
<div class="code" style="top:245.24px">    <span class="d"><span class="c">获取指定目录中所有文件的文件名，去掉</span> .csv <span class="c">后缀后形成一个</span>set<span class="c">返回。</span></span></div>
<div class="ln" style="top:260.60px">14</div>
<div class="ln" style="top:275.96px">15</div>
<div class="code" style="top:275.96px">    <span class="d"><b style="font-style:normal;text-decoration:underline;text-underline-offset:1.5px">:param</b> path: <span class="c">目标目录路径</span></span></div>
<div class="ln" style="top:291.32px">16</div>
<div class="code" style="top:291.32px">    <span class="d"><b style="font-style:normal;text-decoration:underline;text-underline-offset:1.5px">:return</b>: <span class="c">一个</span>set</span></div>
<div class="ln" style="top:306.68px">17</div>
<div class="code" style="top:306.68px">    <span class="d">"""</span></div>
<div class="ln" style="top:322.04px">18</div>
<div class="code" style="top:322.04px">    result = <span class="b">set</span>()</div>
<div class="ln" style="top:337.40px">19</div>
<div class="code" style="top:337.40px">    <span class="k">try</span>:</div>
<div class="ln" style="top:352.76px">20</div>
<div class="code" style="top:352.76px">        <span class="g"># <span class="c">遍历目标目录中的所有文件</span></span></div>
<div class="ln" style="top:368.12px">21</div>
<div class="code" style="top:368.12px">        <span class="k">for</span> filename <span class="k">in</span> os.listdir(path):</div>
<div class="ln" style="top:383.48px">22</div>
<div class="code" style="top:383.48px">            <span class="k">if</span> filename.endswith(<span class="s">".note"</span>):</div>
<div class="ln" style="top:398.84px">23</div>
<div class="code" style="top:398.84px">                <span class="g"># <span class="c">去掉</span> .csv <span class="c">后缀</span></span></div>
<div class="ln" style="top:414.20px">24</div>
<div class="code" style="top:414.20px">                name_without_suffix = filename[:-<span class="n">5</span>]</div>
<div class="ln" style="top:429.56px">25</div>
<div class="code" style="top:429.56px">                result.add(name_without_suffix)</div>
<div class="ln" style="top:444.92px">26</div>
<div class="code" style="top:444.92px">    <span class="k">except</span> <span class="b">FileNotFoundError</span>:</div>
<div class="ln" style="top:460.28px">27</div>
<div class="code" style="top:460.28px">        <span class="b">print</span>(<span class="s">f"<span class="c">目录</span> </span><span class="k">{</span>path<span class="k">}</span><span class="s"> <span class="c">不存在！</span>"</span>)</div>
<div class="ln" style="top:475.64px">28</div>
<div class="code" style="top:475.64px">    <span class="k">except</span> <span class="b">Exception</span> <span class="k">as</span> e:</div>
<div class="ln" style="top:491.00px">29</div>
<div class="code" style="top:491.00px">        <span class="b">print</span>(<span class="s">f"<span class="c">发生错误<span style="letter-spacing:-3px">：</span></span> </span><span class="k">{</span>e<span class="k">}</span><span class="s">"</span>)</div>
<div class="ln" style="top:506.36px">30</div>
<div class="code" style="top:506.36px">        <span class="k">return</span> <span class="b">set</span>()</div>
<svg style="left:265.1px;top:64.7px" width="7.2" height="7.6" viewBox="0 0 7.2 7.6" ><path d="M.4 .4h6.400v4.200l-3.200 2.800-3.200-2.800z" fill="#2b2b2b" stroke="#6e7274" stroke-width=".8"/><path d="M2 3.200h3.200" stroke="#6e7274" stroke-width=".8"/></svg>
<svg style="left:265.1px;top:172.02px" width="7.2" height="7.6" viewBox="0 0 7.2 7.6" ><path d="M.4 7.200h6.400v-4.200l-3.200-2.800-3.200 2.800z" fill="#2b2b2b" stroke="#6e7274" stroke-width=".8"/><path d="M2 4.400h3.200" stroke="#6e7274" stroke-width=".8"/></svg>
<svg style="left:265.1px;top:218.3px" width="7.2" height="7.6" viewBox="0 0 7.2 7.6" ><path d="M.4 .4h6.400v4.200l-3.200 2.800-3.200-2.800z" fill="#2b2b2b" stroke="#6e7274" stroke-width=".8"/><path d="M2 3.200h3.200" stroke="#6e7274" stroke-width=".8"/></svg>
<svg style="left:265.1px;top:233.66px" width="7.2" height="7.6" viewBox="0 0 7.2 7.6" ><path d="M.4 .4h6.400v4.200l-3.200 2.800-3.200-2.800z" fill="#2b2b2b" stroke="#6e7274" stroke-width=".8"/><path d="M2 3.200h3.200" stroke="#6e7274" stroke-width=".8"/></svg>
<svg style="left:265.1px;top:310.26px" width="7.2" height="7.6" viewBox="0 0 7.2 7.6" ><path d="M.4 7.200h6.400v-4.200l-3.200-2.800-3.200 2.800z" fill="#2b2b2b" stroke="#6e7274" stroke-width=".8"/><path d="M2 4.400h3.200" stroke="#6e7274" stroke-width=".8"/></svg>
<svg style="left:265.1px;top:341.18px" width="7.2" height="7.6" viewBox="0 0 7.2 7.6" ><path d="M.4 .4h6.400v4.200l-3.200 2.800-3.200-2.800z" fill="#2b2b2b" stroke="#6e7274" stroke-width=".8"/><path d="M2 3.200h3.200" stroke="#6e7274" stroke-width=".8"/></svg>
<svg style="left:265.1px;top:371.9px" width="7.2" height="7.6" viewBox="0 0 7.2 7.6" ><path d="M.4 .4h6.400v4.200l-3.200 2.800-3.200-2.800z" fill="#2b2b2b" stroke="#6e7274" stroke-width=".8"/><path d="M2 3.200h3.200" stroke="#6e7274" stroke-width=".8"/></svg>
<svg style="left:265.1px;top:387.26px" width="7.2" height="7.6" viewBox="0 0 7.2 7.6" ><path d="M.4 .4h6.400v4.200l-3.200 2.800-3.200-2.800z" fill="#2b2b2b" stroke="#6e7274" stroke-width=".8"/><path d="M2 3.200h3.200" stroke="#6e7274" stroke-width=".8"/></svg>
<svg style="left:265.1px;top:433.14px" width="7.2" height="7.6" viewBox="0 0 7.2 7.6" ><path d="M.4 7.200h6.400v-4.200l-3.200-2.800-3.200 2.800z" fill="#2b2b2b" stroke="#6e7274" stroke-width=".8"/><path d="M2 4.400h3.200" stroke="#6e7274" stroke-width=".8"/></svg>
</div></div>
<svg style="left:961.7px;top:65.6px" width="7.8" height="6.9" viewBox="0 0 7.8 6.9" ><path d="M3.900 0l3.900 6.900h-7.800z" fill="#96927c"/><path d="M3.900 2.400v2.300M3.900 5.300v.8" stroke="#2b2b2b" stroke-width=".9"/></svg>
<div class="t" style="left:971.8px;top:63.2px;color:#bbbbbb;font-size:8.800px;">1</div>
<svg style="left:984.2px;top:67px" width="6" height="3.8" viewBox="0 0 6 3.8" ><path d="M.3 3.500l2.700-2.900 2.700 2.900" fill="none" stroke="#a9abad" stroke-width="1.100"/></svg>
<svg style="left:999.3px;top:67.2px" width="6" height="3.8" viewBox="0 0 6 3.8" ><path d="M.3 .3l2.700 2.900 2.700-2.900" fill="none" stroke="#a9abad" stroke-width="1.100"/></svg>
<div class="t" style="left:229px;top:505px;color:#bbbbbb;letter-spacing:0.081px;">view_combination()</div>
<svg style="left:22.8px;top:522.5px" width="5.6" height="9" viewBox="0 0 5.6 9" ><circle cx="1.200" cy="1.400" r="1.100" fill="#afb1b3"/><circle cx="4.400" cy="2.600" r="1.100" fill="#afb1b3"/><circle cx="1.200" cy="7.600" r="1.100" fill="#afb1b3"/><path d="M1.200 1.400v6.200M4.400 2.600c0 2.400-3.200 1.600-3.200 3.600" fill="none" stroke="#afb1b3" stroke-width=".9"/></svg>
<div class="t" style="left:33px;top:521.5px;color:#bbbbbb;letter-spacing:-0.600px;font-size:8.200px;">Git</div>
<svg style="left:59px;top:522.6px" width="8.6" height="8.6" viewBox="0 0 8.6 8.6" ><path d="M4.300 0l4.300 2-4.300 2-4.300-2z" fill="#afb1b3"/><path d="M0 4.200l4.300 2 4.300-2M0 6.300l4.300 2 4.300-2" fill="none" stroke="#afb1b3" stroke-width=".9"/></svg>
<div class="t" style="left:71px;top:521.5px;color:#bbbbbb;letter-spacing:-0.082px;font-size:8.200px;">Python Packages</div>
<svg style="left:151px;top:523.5px" width="7.5" height="6.6" viewBox="0 0 7.5 6.6" ><path d="M0 .6h1.200M2.400 .6h5.100M0 3.300h1.200M2.400 3.300h5.100M0 6h1.200M2.400 6h5.100" stroke="#afb1b3" stroke-width="1.100"/></svg>
<div class="t" style="left:161.5px;top:521.5px;color:#bbbbbb;letter-spacing:-0.504px;font-size:8.200px;">TODO</div>
<svg style="left:199px;top:522.6px" width="8.4" height="8.4" viewBox="0 0 8.4 8.4" ><path d="M2 2.600c0-1.800.6-2.600 2.200-2.600s2.200.8 2.200 2.600v1.200h-3.400c-.8 0-1 .4-1 1.200v1h-1c-.8 0-1-.8-1-1.800s.2-1.800 1-1.800z" fill="#afb1b3"/><path d="M6.400 5.800c0 1.800-.6 2.600-2.200 2.600s-2.200-.8-2.200-2.600v-1.200h3.400c.8 0 1-.4 1-1.200v-1h1c.8 0 1 .8 1 1.800s-.2 1.800-1 1.800z" fill="#afb1b3"/></svg>
<div class="t" style="left:210.5px;top:521.5px;color:#bbbbbb;letter-spacing:0.013px;font-size:8.200px;">Python Console</div>
<svg style="left:286px;top:523.3px" width="6.8" height="6.8" viewBox="0 0 6.8 6.8" ><circle cx="3.400" cy="3.400" r="3.400" fill="#afb1b3"/><path d="M3.400 1.400v2.600M3.400 4.800v.9" stroke="#3c3f41" stroke-width="1"/></svg>
<div class="t" style="left:296.5px;top:521.5px;color:#bbbbbb;letter-spacing:-0.074px;font-size:8.200px;">Problems</div>
<svg style="left:346px;top:523.2px" width="8" height="7" viewBox="0 0 8 7" ><rect width="8" height="7" rx=".6" fill="#afb1b3"/><path d="M1.400 1.800l1.800 1.500-1.800 1.500M4 5.200h2.400" fill="none" stroke="#3c3f41" stroke-width=".9"/></svg>
<div class="t" style="left:357.5px;top:521.5px;color:#bbbbbb;letter-spacing:0.131px;font-size:8.200px;">Terminal</div>
<svg style="left:404px;top:522.6px" width="9" height="8.6" viewBox="0 0 9 8.6" ><circle cx="4.500" cy="1.500" r="1.400" fill="#afb1b3"/><circle cx="1.500" cy="7" r="1.400" fill="#afb1b3"/><circle cx="7.500" cy="7" r="1.400" fill="#afb1b3"/><path d="M4.500 1.500l-3 5.500M4.500 1.500l3 5.500" stroke="#afb1b3" stroke-width=".9"/></svg>
<div class="t" style="left:416.5px;top:521.5px;color:#bbbbbb;letter-spacing:-0.047px;font-size:8.200px;">Endpoints</div>
<svg style="left:467.5px;top:523.2px" width="7.4" height="7.4" viewBox="0 0 7.4 7.4" ><circle cx="3.700" cy="3.700" r="3.700" fill="#afb1b3"/><path d="M2.700 1.900l3 1.800-3 1.800z" fill="#3c3f41"/></svg>
<div class="t" style="left:479px;top:521.5px;color:#bbbbbb;letter-spacing:-0.238px;font-size:8.200px;">Services</div>
<svg style="left:5px;top:537.3px" width="7.6" height="7.6" viewBox="0 0 7.6 7.6" ><path d="M1.800 .4h5.400v5.400M.4 1.800h5.400v5.400h-5.400z" fill="none" stroke="#9a9c9e" stroke-width=".9"/></svg>
<div class="t" style="left:851px;top:535.3px;color:#aaaaaa;letter-spacing:-0.095px;">Python 3.10 (StockSelector)</div>
<svg style="left:970.5px;top:537.2px" width="5.6" height="8.4" viewBox="0 0 5.6 8.4" ><circle cx="1.200" cy="1.300" r="1" fill="#afb1b3"/><circle cx="4.400" cy="2.300" r="1" fill="#afb1b3"/><circle cx="1.200" cy="7.100" r="1" fill="#afb1b3"/><path d="M1.200 1.300v5.800M4.400 2.300c0 2.300-3.200 1.500-3.200 3.300" fill="none" stroke="#afb1b3" stroke-width=".9"/></svg>
<div class="t" style="left:981px;top:535.3px;color:#bbbbbb;letter-spacing:-0.004px;">main</div>
<svg style="left:1007px;top:537.6px" width="7.6" height="7.4" viewBox="0 0 7.6 7.4" ><rect x="2" y="3.400" width="5.400" height="4" fill="#afb1b3"/><path d="M.5 3.400v-1.400c0-1 .6-1.600 1.500-1.600s1.500.6 1.500 1.600v1.400" fill="none" stroke="#afb1b3" stroke-width=".9"/></svg>
<div class="a" style="left:900px;top:472.100px;width:124px;height:17.700px;background:#fdfdfd;border-radius:3px 0 0 3px"></div>
<svg style="left:883.5px;top:468.8px" width="23" height="22" viewBox="0 0 23 22" ><rect x="2" y="2" width="19" height="18" rx="2.400" fill="#ee6432" transform="rotate(-10 11.500 11)"/><text x="11.600" y="17.600" text-anchor="middle" font-family="Liberation Sans,sans-serif" font-weight="bold" font-size="18" fill="#fff" letter-spacing="0" transform="rotate(-8 11.500 11) translate(-4.500 0) scale(1.400 1)" >S</text></svg>
<div class="a" style="left:910.500px;top:474.500px;font-family:'Liberation Sans','Noto Sans CJK SC',sans-serif;font-weight:bold;font-size:10.500px;line-height:12px;color:#2a78d2;letter-spacing:0">中</div>
<svg style="left:928.5px;top:478px" width="9" height="7" viewBox="0 0 9 7" ><circle cx="1.800" cy="1.800" r="1.100" fill="none" stroke="#2a78d2" stroke-width=".9"/><path d="M6.200 3.200c1 0 1.400 1.600-.4 3" fill="none" stroke="#2a78d2" stroke-width="1.300" stroke-linecap="round"/></svg>
<svg style="left:945.5px;top:475.6px" width="8" height="11" viewBox="0 0 8 11" ><rect x="2.200" y="0" width="3.600" height="6.600" rx="1.800" fill="#2a78d2"/><path d="M.5 4.600c0 2.200 1.400 3.400 3.500 3.400s3.500-1.200 3.500-3.400M4 8v2.200M2 10.400h4" fill="none" stroke="#2a78d2" stroke-width=".9"/></svg>
<svg style="left:961px;top:477.3px" width="10.4" height="7.6" viewBox="0 0 10.4 7.6" ><rect x=".5" y=".5" width="9.400" height="6.600" rx=".8" fill="#3b86d8" stroke="#2a6fc4" stroke-width="1"/><path d="M2 2.500h6.400M2 3.900h6.400M3 5.300h4.400" stroke="#e8f1fb" stroke-width=".7" stroke-dasharray="1 .5"/></svg>
<svg style="left:977.5px;top:476px" width="11" height="10" viewBox="0 0 11 10" ><path d="M2.600 1.600l2 .8h2l2-.8 2.200 2.200-1.600 1.600-.6-.5v4.700h-6v-4.700l-.6.500-1.600-1.600z" fill="#9b6be8"/><circle cx="9.400" cy="1.600" r="1.500" fill="#f05a5a"/></svg>
<svg style="left:995px;top:477px" width="9.6" height="9.6" viewBox="0 0 9.6 9.6" ><rect x="0" y="0" width="4" height="4" rx=".8" fill="#2a78d2"/><rect x="5.400" y="0" width="4" height="4" rx="2" fill="#2a78d2"/><rect x="0" y="5.400" width="4" height="4" rx=".8" fill="#2a78d2"/><rect x="5.400" y="5.400" width="4" height="4" rx=".8" fill="#2a78d2"/></svg>
<svg style="left:1011px;top:475.5px" width="13" height="11" viewBox="0 0 13 11" ><circle cx="6" cy="5.500" r="5" fill="#fff" stroke="#e07a3a" stroke-width="1"/><path d="M2 4.200h8v2.200c-1 .8-2.600 1-4 1s-3-.2-4-1z" fill="#e0572e"/><circle cx="4.200" cy="5.200" r=".7" fill="#fff"/><circle cx="7.800" cy="5.200" r=".7" fill="#fff"/></svg>
</div></body></html>
